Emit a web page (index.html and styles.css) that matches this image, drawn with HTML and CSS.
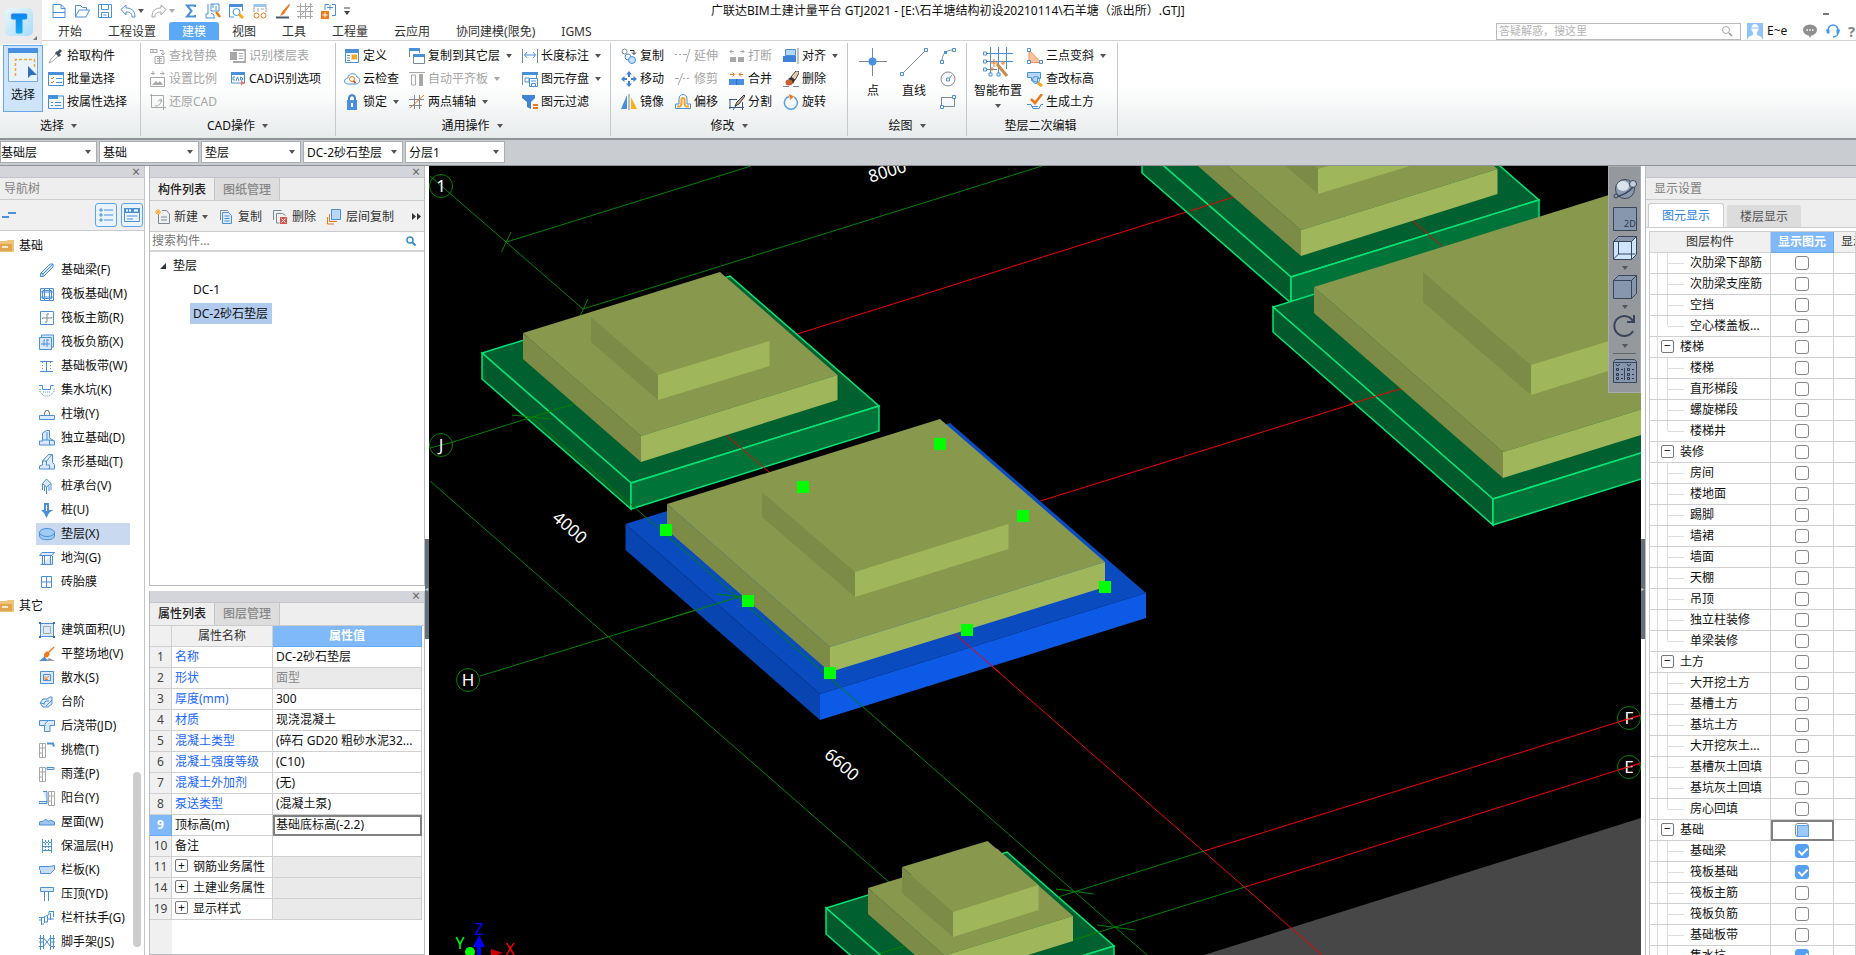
FILE: index.html
```html
<!DOCTYPE html>
<html lang="zh-CN">
<head>
    <meta charset="UTF-8">
    <meta name="viewport" content="width=device-width, initial-scale=1.0">
    <title>广联达BIM土建计量平台 GTJ2021</title>
    <link rel="stylesheet" href="styles.css">
</head>
<body>

    <header class="top">
        <button class="app-btn" aria-label="应用菜单">
            <svg width="42" height="44" viewBox="0 0 42 44">
                <defs>
                    <linearGradient id="logo" x1="0" y1="0" x2="1" y2="1"><stop offset="0" stop-color="#eaf6fe"/><stop offset="1" stop-color="#a9dbfa"/></linearGradient>
                    <linearGradient id="logoT" x1="0" y1="0" x2="0" y2="1"><stop offset="0" stop-color="#0a78e8"/><stop offset="1" stop-color="#16b4f6"/></linearGradient>
                </defs>
                <rect x="5" y="8" width="28" height="28" rx="5" fill="url(#logo)"/>
                <text class="logo-t" x="19" y="32" fill="url(#logoT)" stroke="url(#logoT)" stroke-width="3">T</text>
                <path d="M37 36v4h-4z" fill="#777"/>
            </svg>
        </button>
        <div class="top-rows">
            <div class="title-row">
                <div class="quick">
                    <button aria-label="新建"><svg class="i" viewBox="0 0 16 16"><path d="M2 1.500h8l4 4v9H2z M10 1.500v4h4 M2 9.500h12" class="b"/></svg></button>
                    <button aria-label="打开"><svg class="i" viewBox="0 0 16 16"><path d="M1.500 14V2.500h5l2 2h4V7 M1.500 14L5 7h10.500l-3.500 7z" class="b"/></svg></button>
                    <button aria-label="保存"><svg class="i" viewBox="0 0 16 16"><path d="M1.500 1.500h13v13h-13z M4.500 1.500v5h7v-5 M4.500 14.500v-5h7v5 M6.500 12h3" class="b"/></svg></button>
                    <button aria-label="撤销"><svg class="i" viewBox="0 0 16 16"><path d="M1 6.500L6 2v3c5 0 9 2 9 9h-3c0-4-2-5-6-5v3z" class="b"/></svg><span class="caret"></span></button>
                    <button aria-label="恢复"><svg class="i" viewBox="0 0 16 16"><path d="M15 6.500L10 2v3c-5 0-9 2-9 9h3c0-4 2-5 6-5v3z" class="g"/></svg><span class="caret dim"></span></button>
                    <button aria-label="汇总"><svg class="i" viewBox="0 0 16 16"><path d="M13 4V2.500H5L9.500 8 5 13.500h8V12" fill="none" stroke="#4a90d9" stroke-width="2"/></svg></button>
                    <button aria-label="查看报表"><svg class="i" viewBox="0 0 16 16"><path d="M3 1v10H1v4h9M6 1h8v7H6z M6 10l3 2v3M8 1v4 M11 3v4" class="b"/><path d="M11 9l4 5" stroke="#e67817" stroke-width="2.500"/></svg></button>
                    <button aria-label="查找"><svg class="i" viewBox="0 0 16 16"><path d="M1.500 14V1.500h13V8 M1.500 14H6" class="b"/><path d="M1 1h14v3H1z" fill="#4a90d9"/><circle cx="8.500" cy="9" r="3.500" class="b"/><path d="M11 11l4 4" stroke="#f7a81b" stroke-width="3"/></svg></button>
                    <button aria-label="公式"><svg class="i" viewBox="0 0 16 16"><path d="M3 9V1.500h12V9" class="g"/><path d="M3 1h12v3H3z" fill="#9cc4ec"/><path d="M6 6h2M10 6h3M6 8h2" class="g"/><circle cx="5.500" cy="12.500" r="2.500" class="o"/><circle cx="12.500" cy="12.500" r="2.500" class="o"/></svg></button>
                    <button aria-label="画笔"><svg class="i" viewBox="0 0 16 16"><path d="M15 1L8 9l-2 4 4-2 6-9z" fill="#f07818"/><path d="M2 14.500h13" stroke="#4d5866" stroke-width="2"/></svg></button>
                    <button aria-label="轴网"><svg class="i" viewBox="0 0 16 16"><path d="M3.500 0v16M8.500 0v16M13.500 0v16M0 3.500h16M0 8.500h16M0 13.500h16M1 15L15 1" class="g"/></svg></button>
                    <button aria-label="导入"><svg class="i" viewBox="0 0 16 16"><path d="M5 7V1.500h4M12 1.500h3.500v11H12" class="b"/><path d="M7 4.500h6M10 2v5" class="b"/><path d="M1 8h8v8H1z" fill="#f07818"/><path d="M5 9.500v5M2.500 12h5" stroke="#fff"/></svg></button>
                    <button aria-label="自定义"><svg width="8" height="12" viewBox="0 0 8 12"><path d="M1 3h6" stroke="#444"/><path d="M1 6h6L4 10z" fill="#444"/></svg></button>
                </div>
                <h1 class="title">广联达BIM土建计量平台 GTJ2021 - [E:\石羊塘结构初设20210114\石羊塘（派出所）.GTJ]</h1>
                <button class="min-btn" aria-label="最小化"></button>
            </div>
            <div class="menu-row">
                <nav class="menu">
                    <button>开始</button>
                    <button>工程设置</button>
                    <button class="active">建模</button>
                    <button>视图</button>
                    <button>工具</button>
                    <button>工程量</button>
                    <button>云应用</button>
                    <button>协同建模(限免)</button>
                    <button>IGMS</button>
                </nav>
                <div class="help">
                    <label class="ask">
                        <input type="text" placeholder="答疑解惑，搜这里" aria-label="答疑解惑">
                        <svg width="12" height="12" viewBox="0 0 12 12"><circle cx="5" cy="5" r="3.500" class="g"/><path d="M8 8l3 3" stroke="#999" stroke-width="1.500"/></svg>
                    </label>
                    <svg class="avatar" width="16" height="16" viewBox="0 0 16 16"><path d="M0 0h16v16H0z" fill="#8fc4fa"/><path d="M1 16c0-3 3-3 5-4V9C3 7 4 1 8 1s5 6 2 8v3c2 1 5 1 5 4z" fill="#fff"/><path d="M4 5h8" stroke="#8fc4fa"/></svg>
                    <span class="user">E~e</span>
                    <svg width="14" height="14" viewBox="0 0 14 14"><ellipse cx="7" cy="6" rx="7" ry="5.500" fill="#8f8f8f"/><path d="M5 10l2 4 2-4z" fill="#8f8f8f"/><path d="M3.500 6h1.500M6.300 6h1.500M9 6h1.500" stroke="#fff" stroke-width="1.500"/></svg>
                    <svg width="14" height="14" viewBox="0 0 14 14"><path d="M2 7.500V6a5 5 0 0 1 10 0v3c0 2-2 4-5 4" fill="none" stroke="#3f97f5" stroke-width="1.500"/><path d="M0 5.500h3.500v4H1z M10.500 5.500H14l-1 4h-2.500z" fill="#3f97f5"/></svg>
                    <span class="qmark">?</span>
                </div>
            </div>
        </div>
    </header>

    <section class="ribbon">
        <div class="group g-select">
            <div class="tools">
                <button class="big on">
                    <svg width="30" height="34" viewBox="0 0 30 34"><path d="M.5.5h29v33H.5z" fill="#e9f3fd" stroke="#7ba9dc"/><path d="M0 0h30v5H0z" fill="#4a90e2"/><path d="M7.500 28V11.500h19V20" fill="none" stroke="#f5a623" stroke-dasharray="3 2" stroke-width="1.500"/><path d="M20 18v12l3-3 6 0z" fill="#2f71c0"/></svg>
                    <span>选择</span>
                </button>
                <div class="col">
                    <button class="tool"><svg class="i" viewBox="0 0 16 16"><path d="M1 15l2-4 6-6 2 2-6 6z" class="g"/><path d="M8 4l4 4M10 5l3-3" stroke="#46525f" stroke-width="3"/></svg>拾取构件</button>
                    <button class="tool"><svg class="i" viewBox="0 0 16 16"><path d="M.5 2h15v12.500H.5z" class="b"/><path d="M0 1h16v3H0z" fill="#4a90d9"/><path d="M3 7l1 1 2-2M3 11l1 1 2-2" class="o"/><path d="M8 7.500h6M8 11.500h6" class="b"/></svg>批量选择</button>
                    <button class="tool"><svg class="i" viewBox="0 0 16 16"><path d="M.5 2h15v12.500H.5z" class="b"/><path d="M0 1h10v4H0z" fill="#4a90d9"/><path d="M3 8.500h2M3 11.500h2M7 8.500h6M7 11.500h6" class="b"/></svg>按属性选择</button>
                </div>
            </div>
            <button class="label">选择<span class="caret"></span></button>
        </div>
        <div class="group g-cad">
            <div class="tools">
                <div class="col">
                    <button class="tool off"><svg class="i" viewBox="0 0 16 16"><path d="M0 1.500h7v3H0z M3 1v3 M10 2.500h3V6M11 5l2 2 2-2M5 8.500h9v7H5z M7 10.500h5M7 13h5 M9.500 9v6" class="g"/></svg>查找替换</button>
                    <button class="tool off"><svg class="i" viewBox="0 0 16 16"><path d="M1 2.500h4M3 0v4M10 2.500h4M12 .5l2 2-2 2M.5 6.500h14v9H.5z" class="g"/><path d="M2 14l4-4 2 2 2-2 3 4z" fill="#a8a8a8"/></svg>设置比例</button>
                    <button class="tool off"><svg class="i" viewBox="0 0 16 16"><path d="M1.500 0v13.500H16M0 1.500h13.500V16M5 12c4 0 6-2 6-6M8 7l3-2 1 3" class="g"/></svg>还原CAD</button>
                </div>
                <div class="col">
                    <button class="tool off"><svg class="i" viewBox="0 0 16 16"><path d="M3 2h12.500v12H3" fill="none" stroke="#a8a8a8" stroke-width="2"/><path d="M0 4h7v8H0z" fill="#a8a8a8"/><path d="M9 5.500h4M9 8h4M9 10.500h4" class="g"/></svg>识别楼层表</button>
                    <button class="tool"><svg class="i" viewBox="0 0 16 16"><path d="M1.500 2h13v10h-13z" class="b"/><path d="M1 1h14v3H1z" fill="#4a90d9"/><path d="M5 6H3v3h2M6 10l1.500-4L9 10M10.500 6v3h2V7z" class="b"/><path d="M11 9v6l1.500-2H15z" fill="#f07050"/></svg>CAD识别选项</button>
                </div>
            </div>
            <button class="label">CAD操作<span class="caret"></span></button>
        </div>
        <div class="group g-common">
            <div class="tools">
                <div class="col">
                    <button class="tool"><svg class="i" viewBox="0 0 16 16"><path d="M1.500 2h13v12.500h-13z" class="b"/><path d="M1 1h14v4H1z" fill="#4a90d9"/><path d="M3 7.500h3M3 10h3M3 12.500h3" class="b"/><path d="M7.500 6.500H13v5H7.500z" fill="#f5a623"/></svg>定义</button>
                    <button class="tool"><svg class="i" viewBox="0 0 16 16"><path d="M4 13c-5 0-4-6 0-6 0-5 8-6 9-1 4 1 3 7-1 7z" class="b"/><circle cx="8" cy="8" r="2.500" class="o"/><path d="M9.500 10l2 2" stroke="#e94f2d" stroke-width="2"/></svg>云检查</button>
                    <button class="tool"><svg class="i" viewBox="0 0 16 16"><path d="M5 7V5c0-5 6-5 6 0v2" fill="none" stroke="#3f7fcb" stroke-width="2"/><path d="M3 6h10v10H3z" fill="#4a90e2"/><path d="M8 9v4" stroke="#fff" stroke-width="2"/></svg>锁定<span class="caret"></span></button>
                </div>
                <div class="col">
                    <button class="tool"><svg class="i" viewBox="0 0 16 16"><path d="M.5 9V1.500h10V5M4.500 8h11v7.500h-11z" class="s"/><path d="M0 0h11v3H0zM4 6h12v3H4z" fill="#4a90d9"/></svg>复制到其它层<span class="caret"></span></button>
                    <button class="tool off"><svg class="i" viewBox="0 0 16 16"><path d="M0 1.500h16M2.500 4v10h4V4z" class="g"/><path d="M10 3h4v12h-4z" fill="#a8a8a8"/></svg>自动平齐板<span class="caret"></span></button>
                    <button class="tool"><svg class="i" viewBox="0 0 16 16"><path d="M5.500 1v14M10.500 1v14M0 5.500h15M0 11.500h13" class="s"/><path d="M1 14L15 1" class="o"/></svg>两点辅轴<span class="caret"></span></button>
                </div>
                <div class="col">
                    <button class="tool"><svg class="i" viewBox="0 0 16 16"><path d="M.5 1v14M15.500 1v14" class="s"/><path d="M3 7h10M5 4L2.500 7 5 10M11 4l2.500 3L11 10" class="b"/></svg>长度标注<span class="caret"></span></button>
                    <button class="tool"><svg class="i" viewBox="0 0 16 16"><path d="M.5 14V2h14v5" class="s"/><path d="M0 1h16v3H0z" fill="#4a90d9"/><path d="M3 7h4v4H3z M7.500 7.500h8v8h-8z M9.500 12.500h4v3h-4z M9 10h5" class="b"/></svg>图元存盘<span class="caret"></span></button>
                    <button class="tool"><svg class="i" viewBox="0 0 16 16"><path d="M0 1h13v3L9 8v7l-4-2V8L0 4z" fill="#3f82d6"/><path d="M11 11h5M11 14h5" stroke="#f07818" stroke-width="2"/></svg>图元过滤</button>
                </div>
            </div>
            <button class="label">通用操作<span class="caret"></span></button>
        </div>
        <div class="group g-edit">
            <div class="tools">
                <div class="col">
                    <button class="tool"><svg class="i" viewBox="0 0 16 16"><circle cx="3.500" cy="3.500" r="2.500" class="s"/><circle cx="7" cy="9" r="3" class="b"/><circle cx="11" cy="12" r="3.500" fill="#bfe0ff" stroke="#4a90d9"/><path d="M9 2.500h4V6M11 4.500l2 2 2-2" fill="none" stroke="#333"/></svg>复制</button>
                    <button class="tool"><svg class="i" viewBox="0 0 16 16"><path d="M8 0l3 3.500H5zM8 16l3-3.500H5zM0 8l3.500-3v6zM16 8l-3.500-3v6z" fill="#3f82d6"/><path d="M8 3v3M8 10v3M3 8h3M10 8h3" stroke="#3f82d6" stroke-width="2"/></svg>移动</button>
                    <button class="tool"><svg class="i" viewBox="0 0 16 16"><path d="M6 1v14H0z" fill="#4a90e2"/><path d="M10 3v12h6z" fill="#f7b21b"/><path d="M8 0v16" class="s"/></svg>镜像</button>
                </div>
                <div class="col">
                    <button class="tool off"><svg class="i" viewBox="0 0 16 16"><path d="M0 6.500h2M4 6.500h2M8 6.500h4M15 1l-4 13" class="g"/></svg>延伸</button>
                    <button class="tool off"><svg class="i" viewBox="0 0 16 16"><path d="M0 7.500h4M8 7.500h2M12 7.500h2M8 2L3 14" class="g"/></svg>修剪</button>
                    <button class="tool"><svg class="i" viewBox="0 0 16 16"><path d="M.5 14.500V10H4V5c0-6 8-6 8 0v5h3.500v4.500z" class="b"/><path d="M2 12.500h2.500c2 0 2-3 2-7 0-2 3-2 3 0 0 4 0 7 2 7H14" fill="none" stroke="#f5a623" stroke-width="2"/></svg>偏移</button>
                </div>
                <div class="col">
                    <button class="tool off"><svg class="i" viewBox="0 0 16 16"><path d="M1 9h6v5H1zM9 9h6v5H9z" fill="#a8a8a8"/><path d="M1 3.500h4M3 1.500l-2 2 2 2M11 3.500h4M13 1.500l2 2-2 2" class="g"/></svg>打断</button>
                    <button class="tool"><svg class="i" viewBox="0 0 16 16"><path d="M0 8h15v6H0z" fill="#4a90e2"/><path d="M7.500 8v6" stroke="#2f6fbf"/><path d="M1 3.500h4M3.500 1.500l2 2-2 2M10 3.500h4M12 1.500l-2 2 2 2" class="o"/></svg>合并</button>
                    <button class="tool"><svg class="i" viewBox="0 0 16 16"><path d="M1 5v10M0 5.500h8M0 13.500h15M13.500 8v8M4 16l4-6" class="n"/><path d="M15 1L8 8l-2 4 4-2 6-8z" fill="#c9b08f" stroke="#333"/></svg>分割</button>
                </div>
                <div class="col">
                    <button class="tool"><svg class="i" viewBox="0 0 16 16"><path d="M2.500 1.500h10v6h-10z" fill="#b6d6fa" stroke="#4a90d9"/><path d="M0 8h13v6H0z" fill="#3f82d6"/><path d="M15 0v16" class="s"/></svg>对齐<span class="caret"></span></button>
                    <button class="tool"><svg class="i" viewBox="0 0 16 16"><path d="M8 6l5-6h3v2l-4 7z" fill="#e8cfae" stroke="#444"/><path d="M5 8l3-2 4 3-2 4z" fill="#333"/><ellipse cx="6" cy="11.500" rx="3.500" ry="3" fill="#c9602e"/><path d="M0 15.500h6M10 15.500h6" class="s"/></svg>删除</button>
                    <button class="tool"><svg class="i" viewBox="0 0 16 16"><path d="M6 2.500a6.500 6.500 0 1 0 5 .5" fill="none" stroke="#5aa0e6" stroke-width="1.500"/><path d="M6 0l5 2.500L7 6z" fill="#f07818"/></svg>旋转</button>
                </div>
            </div>
            <button class="label">修改<span class="caret"></span></button>
        </div>
        <div class="group g-draw">
            <div class="tools">
                <button class="big"><svg width="30" height="30" viewBox="0 0 30 30"><path d="M14.500 1v28M1 14.500h28" class="s"/><circle cx="14.500" cy="14.500" r="4" fill="#4a90e2"/></svg><span>点</span></button>
                <button class="big"><svg width="30" height="30" viewBox="0 0 30 30"><path d="M3 27L27 3" class="s"/><path d="M1.500 25.500h3v3h-3zM25.500 1.500h3v3h-3z" fill="#fff" stroke="#4a90d9"/></svg><span>直线</span></button>
                <div class="col">
                    <button class="tool" aria-label="弧线"><svg class="i" viewBox="0 0 16 16"><path d="M2 13C2 6 6 2 13 2" class="s"/><path d="M.5 12.500h3v3h-3zM12.500.5h3v3h-3z" fill="#fff" stroke="#4a90d9"/><path d="M4 3h3v3H4z" fill="#4a90d9"/></svg></button>
                    <button class="tool" aria-label="圆"><svg class="i" viewBox="0 0 16 16"><circle cx="8" cy="8" r="7" class="s"/><path d="M8 9l4-5" class="s"/><path d="M6.500 7h3v3h-3z" fill="#fff" stroke="#4a90d9"/></svg></button>
                    <button class="tool" aria-label="矩形"><svg class="i" viewBox="0 0 16 16"><path d="M1.500 3.500h13v9h-13z" class="s"/><path d="M.5 11.500h3v3h-3zM12.500 1.500h3v3h-3z" fill="#fff" stroke="#4a90d9"/></svg></button>
                </div>
            </div>
            <button class="label">绘图<span class="caret"></span></button>
        </div>
        <div class="group g-second">
            <div class="tools">
                <button class="big"><svg width="30" height="30" viewBox="0 0 30 30"><path d="M7.500 0v26M15.500 0v28M23.500 0v22M2 6.500h28M2 14.500h28M2 22.500h12" class="b"/><path d="M.5 5h3v3h-3zM.5 13h3v3h-3zM.5 21h3v3h-3zM6 26h3v3H6zM14 26h3v3h-3z" fill="#fff" stroke="#4a90d9"/><path d="M14 17l10 12" stroke="#c98a4b" stroke-width="3"/><path d="M11 12v8M7 16h8M20 14v4M18 16h4M9 20v4M7 22h4" stroke="#f07818"/></svg><span>智能布置</span><i class="caret"></i></button>
                <div class="col">
                    <button class="tool"><svg class="i" viewBox="0 0 16 16"><path d="M2 2v12.500h12z" fill="#fbc49a" stroke="#f0935a"/><path d="M.5.5h3v3h-3zM.5 12.500h3v3h-3zM12.500 12.500h3v3h-3z" fill="#fff" stroke="#4a90d9"/></svg>三点变斜<span class="caret"></span></button>
                    <button class="tool"><svg class="i" viewBox="0 0 16 16"><path d="M.5 1.500h13v6h-3v4l-6-2v-3h-4z" fill="#b6d6fa" stroke="#4a90d9"/><circle cx="9" cy="9" r="3.500" class="b"/><path d="M11 12l4 3" stroke="#f5a623" stroke-width="3"/></svg>查改标高</button>
                    <button class="tool"><svg class="i" viewBox="0 0 16 16"><path d="M4 5l4 4 7-9" fill="none" stroke="#f07818" stroke-width="2.500"/><path d="M0 10.500h4l2 4h6l2-4h2M5 12.500h6" class="b"/></svg>生成土方</button>
                </div>
            </div>
            <button class="label">垫层二次编辑</button>
        </div>
    </section>

    <section class="combos">
        <span class="combo first"><select aria-label="楼层"><option>基础层</option></select></span>
        <span class="combo"><select aria-label="构件类别"><option>基础</option></select></span>
        <span class="combo"><select aria-label="构件类型"><option>垫层</option></select></span>
        <span class="combo"><select aria-label="构件"><option>DC-2砂石垫层</option></select></span>
        <span class="combo"><select aria-label="分层"><option>分层1</option></select></span>
    </section>

    <main class="work">

        <aside class="dock nav">
            <div class="dock-bar"><button class="x" aria-label="关闭">×</button></div>
            <div class="dock-title">导航树</div>
            <div class="nav-tools">
                <svg width="14" height="8" viewBox="0 0 14 8"><path d="M0 6h7M6 2h8" stroke="#4a90d9" stroke-width="2"/></svg>
                <button class="view-btn" aria-label="列表"><svg class="i" viewBox="0 0 16 16"><path d="M2 2h2v2H2zM2 7h2v2H2zM2 12h2v2H2zM6 3h9M6 8h9M6 13h9" class="b"/></svg></button>
                <button class="view-btn" aria-label="图标"><svg class="i" viewBox="0 0 16 16"><path d="M.5 1.500h15v13H.5z M3 9h10M3 12h6" class="b"/><path d="M0 1h16v5H0z" fill="#4a90d9"/><path d="M2 3.500h2M5 3.500h2M10 3.500h4" stroke="#fff" stroke-width="2"/></svg></button>
            </div>
            <div class="nav-list">
                <div class="folder"><svg class="i" viewBox="0 0 16 16"><path d="M0 3h6l2-1h6v12H0z" fill="#eec37a"/><path d="M0 6h12v7H0z" fill="#dfa650"/><path d="M2 9h6" stroke="#fff" stroke-width="1.500"/></svg>基础</div>
                <button class="item"><svg class="i" viewBox="0 0 16 16"><path d="M1.500 11.500L11 2h3v3l-9.500 9.500h-3z M4.500 11.500L14 2M4 11v3M1.500 11.500h3" class="f"/></svg>基础梁(F)</button>
                <button class="item"><svg class="i" viewBox="0 0 16 16"><path d="M1.500 2.500h13v12h-13zM1.500 6h13M1.500 11h13M5.500 2.500v12M10.500 2.500v12M3.500 4.500h9v8h-9z" class="b"/></svg>筏板基础(M)</button>
                <button class="item"><svg class="i" viewBox="0 0 16 16"><path d="M1.500 1.500h13v13h-13z" class="b"/><path d="M3.500 9V8h9v-1M8 12V4h2M8 12H6" class="s"/></svg>筏板主筋(R)</button>
                <button class="item"><svg class="i" viewBox="0 0 16 16"><path d="M.5 3.500h12v12H.5zM2.500 3V1h12v12h-2" class="f"/><path d="M2 10h9M5 6v6M8 5v8M5 6h1M8 6h2" class="b"/></svg>筏板负筋(X)</button>
                <button class="item"><svg class="i" viewBox="0 0 16 16"><path d="M1 3.500h13M1 13.500h13" class="b"/><path d="M7.500 3v11" class="b"/><path d="M3.500 4v9M11.500 4v9" class="b" stroke-dasharray="1 2"/></svg>基础板带(W)</button>
                <button class="item"><svg class="i" viewBox="0 0 16 16"><path d="M0 3.500h3.500v4h8v-4H15" class="b"/><path d="M1 7v3l4 4h5l5-4V7M4 10h8" class="b" stroke-dasharray="1 1"/></svg>集水坑(K)</button>
                <button class="item"><svg class="i" viewBox="0 0 16 16"><path d="M.5 9.500h15v4H.5z" class="f"/><path d="M5.500 9V6h1V4.500h3V6h1v3" class="s"/></svg>柱墩(Y)</button>
                <button class="item"><svg class="i" viewBox="0 0 16 16"><path d="M.5 15V11h3V3l4-2.500h3V8l5 3v4z M3.500 10h7l5 1M8 2v8M10.500 10v5" class="f"/></svg>独立基础(D)</button>
                <button class="item"><svg class="i" viewBox="0 0 16 16"><path d="M.5 15v-3l3-1V7l6-6.500h4v8l2 2V15z M3.500 7h4l5-6M7.500 7v4h3v4" class="f"/></svg>条形基础(T)</button>
                <button class="item"><svg class="i" viewBox="0 0 16 16"><path d="M7.500 1L12 5.500 7.500 9 3.500 5.500z M3.500 6v6M7.500 9v7M12 6v6M5.500 8v5M10 8v5" class="f"/></svg>桩承台(V)</button>
                <button class="item"><svg class="i" viewBox="0 0 16 16"><path d="M5 1h5v7h4l-4 3-2.500 5L5 11 2 8h3z" fill="#4a90d9"/><path d="M7.500 3v6" stroke="#fff"/></svg>桩(U)</button>
                <button class="item selected"><svg class="i" viewBox="0 0 16 16"><path d="M.5 6v4c0 5 15 5 15 0V6" fill="#9fcbf5" stroke="#4a90d9"/><ellipse cx="8" cy="6.500" rx="7.500" ry="4" fill="#9fcbf5" stroke="#4a90d9"/></svg>垫层(X)</button>
                <button class="item"><svg class="i" viewBox="0 0 16 16"><path d="M.5 5.500L3 2.500h12.500L13 5.500zM3.500 6v8.500h-2M5.500 6v8M11.500 6v8.500H3M13.500 6v8.500h-2" class="f"/></svg>地沟(G)</button>
                <button class="item"><svg class="i" viewBox="0 0 16 16"><path d="M2.500 2.500h10v11h-10zM7.500 2.500v11M2.500 8h10" class="b"/></svg>砖胎膜</button>
                <div class="folder"><svg class="i" viewBox="0 0 16 16"><path d="M0 3h6l2-1h6v12H0z" fill="#eec37a"/><path d="M0 6h12v7H0z" fill="#dfa650"/><path d="M2 9h6" stroke="#fff" stroke-width="1.500"/></svg>其它</div>
                <button class="item"><svg class="i" viewBox="0 0 16 16"><path d="M1.500 1.500h13v13h-13z" class="f"/><path d="M4.500 4.500h7v7h-7z" class="g"/><path d="M0 0h2v2H0zM14 0h2v2h-2zM0 14h2v2H0zM14 14h2v2h-2z" fill="#3b6fa8"/></svg>建筑面积(U)</button>
                <button class="item"><svg class="i" viewBox="0 0 16 16"><path d="M15 1L9 7" stroke="#f07818" stroke-width="1.500"/><path d="M8 5l3 3-2 3-4 1 0-4z" fill="#f07818"/><path d="M0 15l5-4 5 4z" fill="#4a90d9"/><path d="M7 15l3-3 6 3z" fill="#999"/></svg>平整场地(V)</button>
                <button class="item"><svg class="i" viewBox="0 0 16 16"><path d="M1.500 1.500h13v12h-13zM4.500 4.500h7v6h-7z" class="f"/><path d="M10 6L6.500 9M6 6.500V9.500h3" class="o"/></svg>散水(S)</button>
                <button class="item"><svg class="i" viewBox="0 0 16 16"><path d="M1 9l3-4h4l3-2h2v7l-4 3H4z M4 10l3-3h3M7 12l4-4 2-2M1 9l5 1" class="f"/></svg>台阶</button>
                <button class="item"><svg class="i" viewBox="0 0 16 16"><path d="M.5 2.500h15v5H11v6H5.500v-6h-5z M9 3c-2 1-3 3-3 5" class="f"/></svg>后浇带(JD)</button>
                <button class="item"><svg class="i" viewBox="0 0 16 16"><path d="M.5 1.500h6v14h-6zM.5 6h6M.5 11h3M3.500 2v13" class="g"/><path d="M8 1.500h6l1 3" class="b" stroke-width="2"/></svg>挑檐(T)</button>
                <button class="item"><svg class="i" viewBox="0 0 16 16"><path d="M.5 1.500h6v14h-6zM.5 6h6M.5 11h3M3.500 2v13" class="g"/><path d="M8 1.500h7v2H8z" class="f"/></svg>雨蓬(P)</button>
                <button class="item"><svg class="i" viewBox="0 0 16 16"><path d="M9.500 1.500h6v14h-6zM9.500 6h6M9.500 11h3M12.500 2v13" class="g"/><path d="M4 1.500h4v11M0 13.500h8v-2H0z" class="f"/></svg>阳台(Y)</button>
                <button class="item"><svg class="i" viewBox="0 0 16 16"><path d="M.5 11V8l4-1 2-2 2 2h2l1-1 4 2v3z" fill="#9cc4ec" stroke="#4a90d9"/></svg>屋面(W)</button>
                <button class="item"><svg class="i" viewBox="0 0 16 16"><path d="M3.500 1v14M12.500 1v14" class="b"/><path d="M6.500 2v12M9.500 2v12M4 4.500h8M4 8.500h8M4 12.500h8" class="b" stroke-dasharray="2 1"/></svg>保温层(H)</button>
                <button class="item"><svg class="i" viewBox="0 0 16 16"><path d="M.5 4.500h10l5-1v4l-4 4h-10v-3l-1-1z" fill="#c4dcf5" stroke="#4a90d9"/></svg>栏板(K)</button>
                <button class="item"><svg class="i" viewBox="0 0 16 16"><path d="M1.500 1.500h13v4h-13zM5.500 6v9M9.500 6v9" class="f"/></svg>压顶(YD)</button>
                <button class="item"><svg class="i" viewBox="0 0 16 16"><path d="M0 7.500h4l6-3V1.500h5M2.500 7v8M5.500 7v6M8.500 6v6M11.500 3v7M14.500 2v5M0 10h3M2 14h3M5 12h4M9 9h6" class="b"/></svg>栏杆扶手(G)</button>
                <button class="item"><svg class="i" viewBox="0 0 16 16"><path d="M1.500 1v15M4.500 1v14M11.500 1v15M14.500 1v14M0 4.500h5M0 12.500h5M11 4.500h5M11 12.500h5M4 3l8 10M4 13l8-10M0 8h5M11 8h5" class="b"/></svg>脚手架(JS)</button>
                <div class="thumb"></div>
            </div>
        </aside>

        <div class="middle">
            <section class="dock comps">
                <div class="dock-bar"><button class="x" aria-label="关闭">×</button></div>
                <div class="tabs"><button class="tab active">构件列表</button><button class="tab">图纸管理</button></div>
                <div class="comp-tools">
                    <button><svg class="i" viewBox="0 0 16 16"><path d="M3.500 5v9.500h11V5l-3-3.500H7M6 8h6M6 11h6" class="s"/><path d="M3 0v6M0 3h6M1 1l4 4M5 1L1 5" stroke="#f5a623"/></svg>新建<span class="caret"></span></button>
                    <button><svg class="i" viewBox="0 0 16 16"><path d="M1.500 11V1.500h7l1 1" class="s"/><path d="M3.500 3.500h6l3 3v8h-9zM5.500 7h5M5.500 9.500h5M5.500 12h5" class="f"/></svg>复制</button>
                    <button><svg class="i" viewBox="0 0 16 16"><path d="M.5 11V1.500h8M3.500 4.500h6l3 2M3.500 4.500v9.500h3" class="s"/><path d="M7 8h7v7H7z" fill="#d9534f"/><path d="M8.500 9.500l4 4M12.500 9.500l-4 4" stroke="#fff"/></svg>删除</button>
                    <button><svg class="i" viewBox="0 0 16 16"><path d="M4.500.5h9v10h-9z" fill="#b6d6fa" stroke="#4a90d9"/><path d="M2.500 5v7.500H10M.5 8v7H7" class="o"/></svg>层间复制</button>
                    <button class="more" aria-label="更多"><svg width="9" height="7" viewBox="0 0 9 7"><path d="M0 0l4 3.500L0 7zM5 0l4 3.500L5 7z" fill="#333"/></svg></button>
                </div>
                <label class="comp-search">
                    <input type="text" placeholder="搜索构件..." aria-label="搜索构件">
                    <svg width="10" height="10" viewBox="0 0 10 10"><circle cx="4" cy="4" r="3" fill="none" stroke="#3a8fc9" stroke-width="1.500"/><path d="M6.500 6.500l3 3" stroke="#3a8fc9" stroke-width="2"/></svg>
                </label>
                <div class="comp-tree">
                    <div class="root"><svg width="6" height="6" viewBox="0 0 6 6"><path d="M6 0v6H0z" fill="#333"/></svg>垫层</div>
                    <button>DC-1</button>
                    <button class="selected">DC-2砂石垫层</button>
                </div>
            </section>
            <section class="dock props">
                <div class="dock-bar"><button class="x" aria-label="关闭">×</button></div>
                <div class="tabs"><button class="tab active">属性列表</button><button class="tab">图层管理</button></div>
                <div class="prop-wrap">
                    <table class="prop-table">
                        <tr><th class="num"></th><th>属性名称</th><th class="hot">属性值</th></tr>
                        <tr><td class="num">1</td><td class="key">名称</td><td>DC-2砂石垫层</td></tr>
                        <tr><td class="num">2</td><td class="key">形状</td><td class="locked">面型</td></tr>
                        <tr><td class="num">3</td><td class="key">厚度(mm)</td><td>300</td></tr>
                        <tr><td class="num">4</td><td class="key">材质</td><td>现浇混凝土</td></tr>
                        <tr><td class="num">5</td><td class="key">混凝土类型</td><td>(碎石 GD20 粗砂水泥32...</td></tr>
                        <tr><td class="num">6</td><td class="key">混凝土强度等级</td><td>(C10)</td></tr>
                        <tr><td class="num">7</td><td class="key">混凝土外加剂</td><td>(无)</td></tr>
                        <tr><td class="num">8</td><td class="key">泵送类型</td><td>(混凝土泵)</td></tr>
                        <tr><td class="num hot">9</td><td>顶标高(m)</td><td class="focus">基础底标高(-2.2)</td></tr>
                        <tr><td class="num">10</td><td>备注</td><td></td></tr>
                        <tr><td class="num">11</td><td><button class="exp">+</button>钢筋业务属性</td><td class="locked"></td></tr>
                        <tr><td class="num">14</td><td><button class="exp">+</button>土建业务属性</td><td class="locked"></td></tr>
                        <tr><td class="num">19</td><td><button class="exp">+</button>显示样式</td><td class="locked"></td></tr>
                    </table>
                </div>
            </section>
        </div>

        <div class="splitter"><span>◂</span></div>

        <section class="canvas">
            <svg class="scene" viewBox="429 166 1212 789" preserveAspectRatio="xMinYMin slice">
                <defs>
                    <!-- square pad with its footing, used twice -->
                    <g id="slab">
                        <path class="g-top" d="M482 353L631 483 879 406 730 276z"/>
                        <path class="g-left" d="M482 353L631 483V509L482 379z"/>
                        <path class="g-right" d="M631 483L879 406V431L631 509z"/>
                    </g>
                    <g id="footing">
                        <path class="o-top" d="M523 333L641 436 837.500 375 720 272z"/>
                        <path class="o-left" d="M523 333L641 436V462L523 359z"/>
                        <path class="o-right" d="M641 436L837.500 375V400L641 462z"/>
                        <path class="o-left" d="M591 317L658 375V400L591 342z"/>
                        <path class="o-right" d="M658 375L769.500 341V366L658 400z"/>
                    </g>
                </defs>

                <path d="M1641 818L1204 955H1641z" fill="#474747"/>

                <!-- axes under the solids -->
                <path class="axis" d="M430 176L583 309M506.500 242L751 166M583 309L1042 166M501.500 252L511 232M588 299L580 316
                    M430 481L889 882M480 676L742 596M430 448L453 442"/>
                <path class="axis red" d="M794 335L1234 197M1037 502L1401 389M955 634L1322 955M1204 851L1641 715M1245 887L1641 763"/>

                <use href="#slab"/>
                <use href="#slab" x="660" y="-206"/>
                <path class="axis red" d="M1190 211L1240 195M1412 220L1442 246"/>
                <use href="#footing" x="660" y="-206"/>

                <path class="g-top" d="M1273 307L1493 499 1750 419V159z"/>
                <path class="g-left" d="M1273 307L1493 499V525L1273 332z"/>
                <path class="g-right" d="M1493 499L1750 419V445L1493 525z"/>
                <path class="axis red" d="M1350 404L1410 386"/>
                <path class="o-top" d="M1314 287L1503 452 1750 376V151z"/>
                <path class="o-left" d="M1314 287L1503 452V478L1314 313z"/>
                <path class="o-right" d="M1503 452L1750 376V401L1503 478z"/>
                <path class="o-left" d="M1423 272L1531 365V395L1423 302z"/>
                <path class="o-right" d="M1531 365L1750 298V327L1531 395z"/>

                <path d="M625.500 524L820 694 1146 593 950 423z" fill="#0a4bbf"/>
                <path d="M625.500 524L820 694V720L625.500 550z" fill="#0845b0"/>
                <path d="M820 694L1146 593V618L820 720z" fill="#0c5ae6"/>

                <path class="g-top" d="M826 908L934 1002 1114 946 1007 852z"/>
                <path class="g-left" d="M826 908L934 1002V1028L826 934z"/>
                <path class="g-right" d="M934 1002L1114 946V971L934 1028z"/>

                <path class="axis" d="M453 442L580 402M512 415L551 419M531 417L1147 955M717 594L742 597M660 621L742 596
                    M1058 897L1204 851M880 953.500L904 946M1018 957L1245 887M1056 889L1094 894M1097 925L1135 930"/>
                <path class="axis red" d="M726 435L769 472M955 634L1000 673"/>
                <use href="#footing"/>

                <path class="o-top" d="M667 504L830 647 1105 562 940 419z"/>
                <path class="o-left" d="M667 504L830 647V672L667 530z"/>
                <path class="o-right" d="M830 647L1105 562V587L830 672z"/>
                <path class="o-left" d="M762 492L855 572V597L762 517z"/>
                <path class="o-right" d="M855 572L1008.500 524V549L855 597z"/>

                <path class="o-top" d="M868 888L944.500 955.500 1073 916 997 848.500z"/>
                <path class="o-left" d="M868 888L944.500 955.500V981L868 914z"/>
                <path class="o-right" d="M944.500 955.500L1073 916V941L944.500 981z"/>
                <path class="o-top" d="M902 867L953 912 1038.500 885 987.500 841z"/>
                <path class="o-left" d="M902 867L953 912V937L902 893z"/>
                <path class="o-right" d="M953 912L1038.500 885V910L953 937z"/>

                <path fill="#0f0" d="M660 524h12v12h-12zM797 481h12v12h-12zM934 438h12v12h-12zM1017 510h12v12h-12zM1099 581h12v12h-12zM961 624h12v12h-12zM824 667h12v12h-12zM742 595h12v12h-12z"/>

                <g class="bubble">
                    <circle cx="441" cy="186" r="11.500"/><circle cx="441" cy="445" r="11.500"/><circle cx="468" cy="680" r="11.500"/>
                    <circle cx="1629" cy="718" r="11.500"/><circle cx="1629" cy="767" r="11.500"/>
                </g>
                <g class="mark">
                    <text x="441" y="192">1</text>
                    <text x="441" y="451">J</text>
                    <text x="468" y="686">H</text>
                    <text x="1629" y="724">F</text>
                    <text x="1629" y="773">E</text>
                    <text transform="translate(566 532) rotate(41)">4000</text>
                    <text transform="translate(838 769) rotate(41)">6600</text>
                    <text transform="translate(889 177) rotate(-17)">8000</text>
                </g>
                <path class="axis red" d="M1618 722L1641 715M1618 770L1641 763"/>

                <path d="M479 935l6 12h-4v10h-4v-10h-4z" fill="#00f"/>
                <circle cx="470" cy="952" r="5" fill="#0f0"/>
                <path d="M503 953l-12-4v8z" fill="#d00000"/>
                <g class="xyz"><text x="479" y="935" fill="#00f">Z</text><text x="460" y="949" fill="#0f0">Y</text><text x="510" y="955" fill="#f00">X</text></g>
            </svg>

            <div class="view-tools">
                <button aria-label="动态观察"><svg width="24" height="24" viewBox="0 0 24 24"><circle cx="12" cy="11" r="9.500" fill="#8d9bb0" stroke="#39465a"/><ellipse cx="10" cy="8" rx="6" ry="5" fill="#dbe3ec"/><circle cx="20" cy="6" r="3.500" fill="#c4cdd8" stroke="#39465a"/><path d="M1 19c8-1 15-5 19-10" fill="none" stroke="#39465a" stroke-width="1.500"/><circle cx="3" cy="18" r="2" fill="#8d9bb0" stroke="#39465a"/></svg></button>
                <button aria-label="二维"><svg width="24" height="24" viewBox="0 0 24 24"><path d="M.5.5h23v23H.5z" fill="#8797ae" stroke="#39465a"/><text class="two-d" x="11" y="20">2D</text></svg></button>
                <button aria-label="线框"><svg width="24" height="24" viewBox="0 0 24 24"><path d="M.5 5.500l5-5h18v18l-5 5H.5z" fill="#cfe5fb" stroke="#39465a"/><path d="M.5 5.500l5-5h18l-5 5z" fill="#8797ae" stroke="#39465a"/><path d="M18.500 5.500v18M5.500 6v12h17M5.500 18l-5 5" fill="none" stroke="#39465a"/></svg><i class="caret"></i></button>
                <button aria-label="实体"><svg width="24" height="24" viewBox="0 0 24 24"><path d="M.5 5.500l5-5h18v18l-5 5H.5z M.5 5.500h18v18M18.500 5.500l5-5" fill="#8797ae" stroke="#39465a"/></svg><i class="caret"></i></button>
                <button aria-label="旋转"><svg width="24" height="24" viewBox="0 0 24 24"><path d="M20 7a10 10 0 1 0 0 10" fill="none" stroke="#39465a" stroke-width="2"/><path d="M21 1v7h-7" fill="none" stroke="#39465a" stroke-width="2"/></svg><i class="caret"></i></button>
                <hr>
                <button aria-label="显示设置"><svg width="24" height="24" viewBox="0 0 24 24"><path d="M.5 2.500l2-2h19l2 2v21H.5z M.5 3.500h23" fill="#8797ae" stroke="#39465a"/><path d="M11.500 9v12" stroke="#39465a"/><path d="M3.500 9.500h2v2h-2zM3.500 14.500h2v2h-2zM3.500 18.500h2v2h-2zM14.500 9.500h2v2h-2zM14.500 14.500h2v2h-2zM14.500 18.500h2v2h-2zM8 10.500h2M8 15.500h2M8 19.500h2M19 10.500h2M19 15.500h2M19 19.500h2M3 5l1.500 2L7 5M14 5l1.500 2L18 5" fill="none" stroke="#2c3747"/></svg></button>
            </div>
        </section>

        <div class="splitter"><span>▸</span></div>

        <aside class="dock display">
            <div class="dock-bar"></div>
            <div class="dock-title">显示设置</div>
            <div class="pill-tabs"><button class="active">图元显示</button><button>楼层显示</button></div>
            <div class="layer-wrap">
                <table class="layer-table">
                    <tr><th>图层构件</th><th class="hot">显示图元</th><th class="cut">显示</th></tr>
                    <tr><td class="leaf">次肋梁下部筋</td><td><input type="checkbox" aria-label="次肋梁下部筋"></td><td></td></tr>
                    <tr><td class="leaf">次肋梁支座筋</td><td><input type="checkbox" aria-label="次肋梁支座筋"></td><td></td></tr>
                    <tr><td class="leaf">空挡</td><td><input type="checkbox" aria-label="空挡"></td><td></td></tr>
                    <tr><td class="leaf last">空心楼盖板...</td><td><input type="checkbox" aria-label="空心楼盖板"></td><td></td></tr>
                    <tr><td class="branch"><button class="exp">−</button>楼梯</td><td><input type="checkbox" aria-label="楼梯组"></td><td></td></tr>
                    <tr><td class="leaf">楼梯</td><td><input type="checkbox" aria-label="楼梯"></td><td></td></tr>
                    <tr><td class="leaf">直形梯段</td><td><input type="checkbox" aria-label="直形梯段"></td><td></td></tr>
                    <tr><td class="leaf">螺旋梯段</td><td><input type="checkbox" aria-label="螺旋梯段"></td><td></td></tr>
                    <tr><td class="leaf last">楼梯井</td><td><input type="checkbox" aria-label="楼梯井"></td><td></td></tr>
                    <tr><td class="branch"><button class="exp">−</button>装修</td><td><input type="checkbox" aria-label="装修"></td><td></td></tr>
                    <tr><td class="leaf">房间</td><td><input type="checkbox" aria-label="房间"></td><td></td></tr>
                    <tr><td class="leaf">楼地面</td><td><input type="checkbox" aria-label="楼地面"></td><td></td></tr>
                    <tr><td class="leaf">踢脚</td><td><input type="checkbox" aria-label="踢脚"></td><td></td></tr>
                    <tr><td class="leaf">墙裙</td><td><input type="checkbox" aria-label="墙裙"></td><td></td></tr>
                    <tr><td class="leaf">墙面</td><td><input type="checkbox" aria-label="墙面"></td><td></td></tr>
                    <tr><td class="leaf">天棚</td><td><input type="checkbox" aria-label="天棚"></td><td></td></tr>
                    <tr><td class="leaf">吊顶</td><td><input type="checkbox" aria-label="吊顶"></td><td></td></tr>
                    <tr><td class="leaf">独立柱装修</td><td><input type="checkbox" aria-label="独立柱装修"></td><td></td></tr>
                    <tr><td class="leaf last">单梁装修</td><td><input type="checkbox" aria-label="单梁装修"></td><td></td></tr>
                    <tr><td class="branch"><button class="exp">−</button>土方</td><td><input type="checkbox" aria-label="土方"></td><td></td></tr>
                    <tr><td class="leaf">大开挖土方</td><td><input type="checkbox" aria-label="大开挖土方"></td><td></td></tr>
                    <tr><td class="leaf">基槽土方</td><td><input type="checkbox" aria-label="基槽土方"></td><td></td></tr>
                    <tr><td class="leaf">基坑土方</td><td><input type="checkbox" aria-label="基坑土方"></td><td></td></tr>
                    <tr><td class="leaf">大开挖灰土...</td><td><input type="checkbox" aria-label="大开挖灰土"></td><td></td></tr>
                    <tr><td class="leaf">基槽灰土回填</td><td><input type="checkbox" aria-label="基槽灰土回填"></td><td></td></tr>
                    <tr><td class="leaf">基坑灰土回填</td><td><input type="checkbox" aria-label="基坑灰土回填"></td><td></td></tr>
                    <tr><td class="leaf last">房心回填</td><td><input type="checkbox" aria-label="房心回填"></td><td></td></tr>
                    <tr><td class="branch"><button class="exp">−</button>基础</td><td class="focus"><input type="checkbox" class="partial" aria-label="基础"></td><td></td></tr>
                    <tr><td class="leaf">基础梁</td><td><input type="checkbox" checked aria-label="基础梁"></td><td></td></tr>
                    <tr><td class="leaf">筏板基础</td><td><input type="checkbox" checked aria-label="筏板基础"></td><td></td></tr>
                    <tr><td class="leaf">筏板主筋</td><td><input type="checkbox" aria-label="筏板主筋"></td><td></td></tr>
                    <tr><td class="leaf">筏板负筋</td><td><input type="checkbox" aria-label="筏板负筋"></td><td></td></tr>
                    <tr><td class="leaf">基础板带</td><td><input type="checkbox" aria-label="基础板带"></td><td></td></tr>
                    <tr><td class="leaf">集水坑</td><td><input type="checkbox" checked aria-label="集水坑"></td><td></td></tr>
                </table>
            </div>
        </aside>
    </main>

</body>
</html>
```

FILE: styles.css
```css
* {
    box-sizing: border-box;
}

body {
    margin: 0;
    height: 100vh;
    display: flex;
    flex-direction: column;
    overflow: hidden;
    background: #fff;
    color: #111;
    font: 12px/18px "Noto Sans", "Noto Sans CJK SC", sans-serif;
}

button, input, select {
    font: inherit;
    color: inherit;
    margin: 0;
    padding: 0;
    border: 0;
    background: none;
    white-space: nowrap;
}

svg {
    display: block;
    flex: none;
}

/* Icons */
.i {
    width: 16px;
    height: 16px;
}

.b { fill: none; stroke: #4a90d9; }
.f { fill: #dbe9f8; stroke: #4a90d9; }
.g { fill: none; stroke: #a8a8a8; }
.s { fill: none; stroke: #7b8894; }
.o { fill: none; stroke: #f07818; }
.n { fill: none; stroke: #34568a; }

.caret {
    flex: none;
    display: inline-block;
    width: 0;
    height: 0;
    border: 3px solid transparent;
    border-top: 4px solid #555;
    border-bottom: 0;
}

.caret.dim {
    border-top-color: #aaa;
}

/* Title and menu */
.top {
    display: flex;
    height: 41px;
    border-bottom: 1px solid #d2d2d2;
}

.app-btn {
    width: 42px;
    height: 44px;
    background: #ebebeb;
    position: relative;
    z-index: 1;
}

.logo-t {
    font: bold 24px "Noto Sans", sans-serif;
    text-anchor: middle;
    stroke-linejoin: round;
}

.top-rows {
    flex: 1;
    display: flex;
    flex-direction: column;
}

.title-row {
    display: flex;
    align-items: center;
    height: 22px;
}

.quick {
    display: flex;
    align-items: center;
    gap: 7px;
    width: 311px;
    padding-left: 9px;
}

.quick button {
    display: flex;
    align-items: center;
    gap: 2px;
}

.title {
    flex: 1;
    margin: 0 0 0 358px;
    font-size: 12px;
    font-weight: normal;
    white-space: nowrap;
}

.min-btn {
    width: 6px;
    height: 2px;
    margin: 6px 27px 0 0;
    background: #777;
}

.menu-row {
    display: flex;
    justify-content: space-between;
    height: 18px;
}

.menu {
    display: flex;
    padding-left: 3px;
}

.menu button {
    height: 18px;
    padding: 1px 13px 0;
    line-height: 17px;
    color: #333;
}

.menu .active {
    background: #5ba8f7;
    color: #fff;
    border-radius: 3px 3px 0 0;
}

.help {
    display: flex;
    align-items: center;
}

.ask {
    display: flex;
    align-items: center;
    width: 245px;
    height: 17px;
    padding: 0 7px 0 2px;
    border: 1px solid #bbb;
}

.ask input {
    flex: 1;
    min-width: 0;
    line-height: 14px;
    height: 14px;
    font-size: 11px;
    outline: 0;
}

.ask input::placeholder {
    color: #b5b5b5;
}

.avatar {
    margin: 0 4px 0 6px;
}

.user {
    width: 36px;
}

.help svg + svg {
    margin-left: 9px;
}

.qmark {
    width: 8px;
    margin-left: 8px;
    font-size: 15px;
    font-weight: bold;
    color: #888;
}

/* Ribbon */
.ribbon {
    display: flex;
    height: 99px;
    padding-top: 2px;
    background: linear-gradient(#fff 45%, #e8ebec);
    border-bottom: 2px solid #8f9396;
}

.group {
    flex: none;
    display: flex;
    flex-direction: column;
    height: 93px;
    padding: 1px 0 0 10px;
    border-right: 1px solid #c6c9cb;
}

.g-select { width: 141px; padding-left: 3px; }
.g-cad { width: 195px; padding-left: 9px; }
.g-common { width: 275px; padding-left: 8px; }
.g-edit { width: 237px; }
.g-draw { width: 119px; }
.g-second { width: 151px; padding-left: 7px; }

.tools {
    display: flex;
    gap: 11px;
    height: 72px;
}

.g-select .tools { gap: 5px; }
.g-cad .tools { gap: 13px; }
.g-common .tools { gap: 10px; }
.g-second .tools { gap: 5px; }
.g-draw .tools { gap: 11px; }

.col {
    display: flex;
    flex-direction: column;
}

.tool {
    display: flex;
    align-items: center;
    height: 23px;
    gap: 3px;
}

.tool .caret {
    margin-left: 3px;
}

.off {
    color: #a5a5a5;
}

.off .caret {
    border-top-color: #a5a5a5;
}

.big {
    display: flex;
    flex-direction: column;
    align-items: center;
    gap: 4px;
    height: 67px;
    padding-top: 3px;
}

.big span {
    line-height: 18px;
}

.big.on {
    width: 40px;
    margin-top: 1px;
    padding-top: 2px;
    background: #cde4fb;
    border: 1px solid #6aa6e6;
}

.big:not(.on) span {
    margin-top: 1px;
}

.label {
    display: flex;
    justify-content: center;
    align-items: center;
    gap: 7px;
    height: 20px;
    padding-right: 10px;
}

.g-select .label { padding-right: 26px; }

/* Combos */
.combos {
    display: flex;
    gap: 2px;
    height: 26px;
    padding: 1px 0 2px;
    background: #c9ccd0;
    border-bottom: 1px solid #8f9396;
}

.combo {
    display: flex;
    align-items: center;
    width: 100px;
    border: 1px solid #a9adb1;
    background: #fff;
}

.combo.first {
    width: 97px;
}

.combo select {
    flex: 1;
    appearance: none;
    height: 20px;
    padding: 1px 0 0 3px;
    outline: 0;
}

.combo.first select {
    padding-left: 0;
}

.combo::after {
    content: "";
    margin-right: 5px;
    border: 3px solid transparent;
    border-top: 4px solid #555;
    border-bottom: 0;
}

/* Docks */
.work {
    flex: 1;
    min-height: 0;
    display: flex;
}

.dock {
    display: flex;
    flex-direction: column;
    min-height: 0;
    background: #fff;
}

.dock-bar {
    flex: none;
    display: flex;
    justify-content: flex-end;
    align-items: center;
    height: 12px;
    padding-right: 4px;
    background: #d4d5da;
    border-bottom: 1px solid #c2c4c8;
}

.x {
    font-size: 14px;
    line-height: 10px;
    color: #666;
}

.dock-title {
    flex: none;
    height: 22px;
    padding-left: 4px;
    line-height: 21px;
    background: #eee;
    border-bottom: 1px solid #ccc;
    color: #808080;
}

.nav {
    flex: none;
    width: 145px;
    border-right: 1px solid #c2c4c8;
}

.nav-tools {
    flex: none;
    display: flex;
    align-items: center;
    gap: 4px;
    height: 31px;
    padding: 0 1px 0 2px;
    background: #f0f0f0;
    border-bottom: 1px solid #c8cacd;
}

.nav-tools > svg {
    margin-right: auto;
}

.view-btn {
    display: flex;
    justify-content: center;
    align-items: center;
    width: 22px;
    height: 24px;
    background: #eaf4ff;
    border: 1px solid #5ba3ee;
    border-radius: 3px;
}

.nav-list {
    flex: 1;
    min-height: 0;
    display: flex;
    flex-direction: column;
    padding-top: 3px;
    overflow: hidden;
    position: relative;
}

.folder, .item {
    flex: none;
    display: flex;
    align-items: center;
    height: 24px;
}

.folder {
    gap: 3px;
}

.item {
    width: 94px;
    height: 22px;
    margin: 1px 0 1px 36px;
    padding-left: 3px;
    gap: 6px;
}

.item.selected {
    background: #c9d9f0;
}

.thumb {
    position: absolute;
    right: 3px;
    bottom: 8px;
    width: 8px;
    height: 175px;
    border-radius: 4px;
    background: #cdcdcd;
}

.middle {
    flex: none;
    display: flex;
    flex-direction: column;
    gap: 5px;
    width: 280px;
    padding-left: 4px;
}

.middle .dock {
    border: 1px solid #b9bbbe;
    border-top: 0;
}

.comps {
    flex: 420 1 0;
}

.props {
    flex: 364 1 0;
}

.tabs {
    flex: none;
    display: flex;
    height: 23px;
    background: #eee;
    border-bottom: 1px solid #ccc;
}

.tab {
    width: 65px;
    padding-top: 1px;
    border-right: 1px solid #c4c4c4;
    background: #ddd;
    color: #888;
    font-weight: 500;
}

.tab.active {
    background: #eee;
    color: #222;
}

.comp-tools {
    flex: none;
    display: flex;
    align-items: center;
    gap: 11px;
    height: 31px;
    padding: 1px 3px 0 5px;
    background: #f0f0f0;
    border-bottom: 1px solid #c8cacd;
    color: #333;
}

.comp-tools button {
    display: flex;
    align-items: center;
    gap: 3px;
}

.comp-tools .caret {
    margin-left: 1px;
}

.comp-tools .more {
    margin-left: auto;
}

.comp-search {
    flex: none;
    display: flex;
    align-items: center;
    height: 20px;
    padding: 0 8px 0 2px;
    border-bottom: 2px solid #d4d5d8;
}

.comp-search input {
    flex: 1;
    outline: 0;
}

.comp-search input::placeholder {
    color: #777;
}

.comp-tree {
    display: flex;
    flex-direction: column;
    align-items: flex-start;
    padding: 2px 0 0 10px;
}

.comp-tree .root {
    display: flex;
    align-items: center;
    gap: 7px;
    height: 24px;
}

.comp-tree button {
    height: 21px;
    margin: 1px 0 2px 30px;
    padding: 0 3px;
}

.comp-tree .selected {
    background: #b1cbee;
    padding-right: 4px;
}

/* Tables */
table {
    border-collapse: separate;
    border-spacing: 0;
    table-layout: fixed;
}

th, td {
    height: 21px;
    padding: 0 0 0 3px;
    line-height: 20px;
    font-weight: normal;
    text-align: left;
    white-space: nowrap;
    overflow: hidden;
    border-right: 1px solid #d0d0d0;
    border-bottom: 1px solid #d0d0d0;
}

th {
    padding: 0;
    background: #f0f0f0;
    text-align: center;
    color: #333;
}

.hot, .prop-table .num.hot {
    background: #80b9fa;
    border-color: #6aaaf0;
    color: #fff;
    font-weight: bold;
}

.prop-wrap {
    flex: 1;
    min-height: 0;
    overflow: hidden;
    background: linear-gradient(90deg, #f0f0f0 22px, #fff 22px);
}

.prop-table {
    width: 272px;
}

.prop-table th:nth-child(2) {
    width: 101px;
}

.prop-table .num {
    width: 22px;
    padding: 0;
    text-align: center;
    background: #f0f0f0;
    color: #444;
}

.key {
    color: #1a66ff;
}

.locked {
    background: #eaeaea;
    color: #888;
}

.focus {
    outline: 2px solid #808080;
    outline-offset: -2px;
}

.exp {
    width: 13px;
    height: 13px;
    margin-right: 6px;
    line-height: 10px;
    vertical-align: 1px;
    border: 1px solid #777;
    border-radius: 2px;
    background: #fff;
}

.prop-table .exp {
    margin-right: 5px;
}

.splitter {
    flex: none;
    display: flex;
    align-items: center;
    width: 4px;
    background: #fff;
}

.splitter span {
    width: 4px;
    height: 100px;
    margin-top: 56px;
    overflow: hidden;
    line-height: 100px;
    font-size: 6px;
    background: #65707b;
    color: #ccc;
}

.display {
    flex: none;
    width: 211px;
    border-left: 1px solid #b9bbbe;
}

.display .dock-title {
    padding-left: 8px;
}

.pill-tabs {
    flex: none;
    display: flex;
    align-items: flex-end;
    gap: 3px;
    height: 28px;
    padding-left: 2px;
    background: #eee;
    border-bottom: 1px solid #ccc;
}

.pill-tabs button {
    width: 74px;
    height: 22px;
    padding-top: 1px;
    background: #dcdcdc;
    color: #555;
    border-radius: 3px 3px 0 0;
}

.pill-tabs .active {
    width: 76px;
    height: 24px;
    background: #fff;
    border: 1px solid #ccc;
    border-bottom: 0;
    color: #2f86e0;
}

.layer-wrap {
    flex: 1;
    min-height: 0;
    margin: 3px 0 0 3px;
    border: 1px solid #ccc;
    border-width: 1px 0 0 1px;
    overflow: hidden;
}

.layer-table {
    width: 206px;
}

.layer-table th:nth-child(1) { width: 121px; }
.layer-table th:nth-child(2) { width: 63px; }

.layer-table td:nth-child(2) {
    padding: 0;
    text-align: center;
}

.layer-table .cut {
    padding-left: 7px;
    text-align: left;
}

.layer-table .leaf {
    padding-left: 40px;
    background: linear-gradient(#ddd, #ddd) 7px 0 / 1px 100% no-repeat,
        linear-gradient(#ddd, #ddd) 17px 0 / 1px 100% no-repeat,
        linear-gradient(#ddd, #ddd) 18px 50% / 16px 1px no-repeat;
}

.layer-table .leaf.last {
    background-size: 1px 100%, 1px 50%, 16px 1px;
}

.layer-table .branch {
    padding-left: 11px;
    background: linear-gradient(#ddd, #ddd) 7px 0 / 1px 100% no-repeat;
}

input[type="checkbox"] {
    appearance: none;
    display: block;
    width: 14px;
    height: 14px;
    margin: 0 auto;
    border: 1px solid #888;
    border-radius: 3px;
    background: #fff;
}

input[type="checkbox"]:checked {
    border-color: #559ff5;
    background: #559ff5;
}

input[type="checkbox"]:checked::before {
    content: "";
    display: block;
    width: 4px;
    height: 7px;
    margin: 1px 0 0 4px;
    border: solid #fff;
    border-width: 0 2px 2px 0;
    transform: rotate(45deg);
}

input.partial::before {
    content: "";
    display: block;
    width: 10px;
    height: 10px;
    margin: 1px;
    border: 1px solid #559ff5;
    background: #9cc8fb;
}

/* Drawing area */
.canvas {
    flex: 1;
    min-width: 0;
    position: relative;
    overflow: hidden;
    background: #000;
}

.scene {
    width: 100%;
    height: 100%;
}

.g-top { fill: #00602f; stroke: #00e676; stroke-width: 1.5; }
.g-left { fill: #005a2c; stroke: #00e676; stroke-width: 1.5; }
.g-right { fill: #007339; stroke: #00e676; stroke-width: 1.5; }
.o-top { fill: #88994d; }
.o-left { fill: #7c8c47; }
.o-right { fill: #a0b65b; }

.axis {
    fill: none;
    stroke: #008400;
}

.axis.red {
    stroke: #f50000;
}

.bubble circle {
    fill: none;
    stroke: #008400;
}

.mark text {
    fill: #fff;
    font-size: 17px;
    text-anchor: middle;
}

.xyz text {
    font-size: 16px;
    text-anchor: middle;
}

.view-tools {
    position: absolute;
    top: 0;
    right: 0;
    display: flex;
    flex-direction: column;
    align-items: center;
    gap: 5px;
    width: 33px;
    height: 227px;
    padding-top: 11px;
    background: #95989d;
    border: 1px solid #a8abb0;
}

.view-tools button {
    display: flex;
    flex-direction: column;
    align-items: center;
    gap: 6px;
}

.view-tools hr {
    width: 23px;
    margin: 0;
    border: 0;
    border-top: 1px solid #666;
}

.two-d {
    font-size: 9px;
    fill: #2c3747;
}
```
